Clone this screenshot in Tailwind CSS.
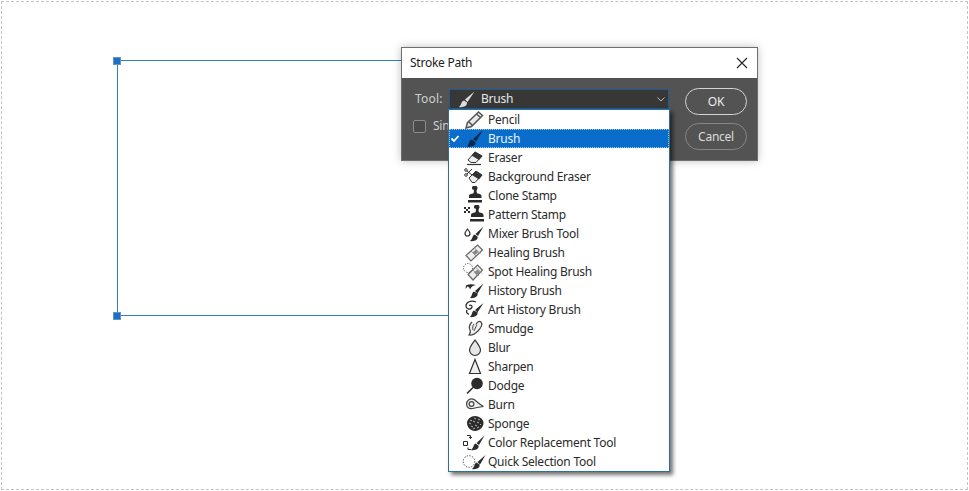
<!DOCTYPE html>
<html lang="en">
<head>
<meta charset="UTF-8">
<title>Stroke Path</title>
<script src="https://cdn.jsdelivr.net/npm/@tailwindcss/browser@4"></script>
</head>
<body class="bg-white">
<div class="relative w-[969px] h-[491px] overflow-hidden font-['Noto_Sans',sans-serif] text-[12px] tracking-[-0.25px]">
  <!-- canvas frame -->
  <div class="absolute left-[1px] top-[1px] w-[967px] h-[489px] border border-dashed border-[#c4c4c4]"></div>

  <!-- path -->
  <div class="absolute left-[117px] top-[60px] w-[400px] h-[256px] border border-[#3380b4]"></div>
  <div class="absolute left-[113px] top-[57px] w-[8px] h-[8px] bg-[#1c6fc6] border border-[#5f95c4]"></div>
  <div class="absolute left-[113px] top-[312px] w-[8px] h-[8px] bg-[#1c6fc6] border border-[#5f95c4]"></div>

  <!-- dialog -->
  <div class="absolute left-[401px] top-[47px] w-[357px] h-[114px] flex flex-col border border-[#6e6e6e] shadow-[0_0_8px_rgba(0,0,0,0.25)]">
    <div class="h-[30px] bg-white flex items-center justify-between pl-[8px] pr-[8px] text-[#222]">
      <span>Stroke Path</span>
      <svg width="12" height="12" viewBox="0 0 12 12" class="mr-[1px]"><path d="M1 1l10 10M11 1L1 11" stroke="#222" stroke-width="1.100" fill="none"/></svg>
    </div>
    <div class="flex-1 bg-[#535353] flex justify-between pl-[11px] pr-[10px] pt-[10px]">
      <div class="flex flex-col mt-[1px]">
        <div class="flex items-center h-[20px] pl-[2px] text-[#cfcfcf]">
          <span class="w-[34px] tracking-[0.2px]">Tool:</span>
          <div class="w-[220px] h-[20px] bg-[#373737] border border-[#1f5a92] flex items-center text-[#e6e6e6]">
            <svg width="24" height="19" viewBox="0 0 24 19" class="ml-[4px] shrink-0"><path d="M20.500 1.500l-9.500 8 2.500 2.500zM10 10.500c-3.500 1.500-2 4-5 6.500 4 .8 8.500-1 8-4.500z" fill="#dcdcdc"/></svg>
            <span class="ml-[3px] flex-1">Brush</span>
            <svg width="8" height="5" viewBox="0 0 8 5" class="mr-[3px]"><path d="M.5.500L4 4 7.500.500" stroke="#bbb" fill="none"/></svg>
          </div>
        </div>
        <div class="flex items-center mt-[8px] text-[#cfcfcf]">
          <span class="w-[13px] h-[13px] rounded-[2px] border border-[#8c8c8c] bg-[#4a4a4a]"></span>
          <span class="ml-[7px]">Sin</span>
        </div>
      </div>
      <div class="flex flex-col gap-[8px]">
        <button class="w-[62px] h-[27px] rounded-full border border-[#d4d4d4] text-[#ececec] text-center">OK</button>
        <button class="w-[62px] h-[27px] rounded-full border border-[#868686] text-[#dcdcdc] text-center">Cancel</button>
      </div>
    </div>
  </div>

  <!-- dropdown menu -->
  <div class="absolute left-[448px] top-[109px] w-[222px] h-[363px] bg-white border border-[#2d7096] shadow-[3px_3px_4px_rgba(0,0,0,0.55)] text-[#2b2b2b] flex flex-col">
    <div class="flex items-center h-[19px] shrink-0">
      <span class="w-[13px]"></span>
      <svg width="24" height="19" viewBox="0 0 24 19"><path d="M5.500 12.500L16.500 2l4 3.500L9.500 16.500l-5.500 1.500zM14.500 4l4 3.500M7 12l3 3" fill="#e8e8e8" stroke="#555" stroke-width="1.500"/></svg>
      <span class="ml-[2px]">Pencil</span>
    </div>
    <div class="flex items-center h-[19px] shrink-0 bg-[#0a6ccb] outline-1 outline-dotted -outline-offset-1 outline-[#9cc8ee] text-[#eaf5ff]">
      <svg width="13" height="19" viewBox="0 0 13 19"><path d="M2.500 9.500l2.500 2.500 4.500-5" stroke="#fff" stroke-width="1.800" fill="none"/></svg>
      <svg width="24" height="19" viewBox="0 0 24 19"><path d="M21 1l-10 9 3 2.500zM9.500 10.500c-3.500 1.500-1.500 4-4.500 7 4.500.8 9.500-1 8.500-4.500z" fill="#0d2a4a"/></svg>
      <span class="ml-[2px]">Brush</span>
    </div>
    <div class="flex items-center h-[19px] shrink-0">
      <span class="w-[13px]"></span>
      <svg width="24" height="19" viewBox="0 0 24 19"><path d="M6 12L13 4l7 4-6 6.500H9z" fill="#eee" stroke="#333"/><path d="M13 3.500l7.500 4.500-3.500 4-7.500-4.500z" fill="#333"/><path d="M5 16.500h14" stroke="#333" stroke-width="1.200"/></svg>
      <span class="ml-[2px]">Eraser</span>
    </div>
    <div class="flex items-center h-[19px] shrink-0">
      <span class="w-[13px]"></span>
      <svg width="24" height="19" viewBox="0 0 24 19"><path d="M7 11l7-7 6 4-7 7.500H10z" fill="#eee" stroke="#333"/><path d="M13.500 4l7 4-3.500 4.500-7-4.500z" fill="#333"/><circle cx="4" cy="3" r="1.300" fill="none" stroke="#333"/><circle cx="4" cy="8" r="1.300" fill="none" stroke="#333"/><path d="M5 4l5 4M5 7l5-5" stroke="#333"/></svg>
      <span class="ml-[2px]">Background Eraser</span>
    </div>
    <div class="flex items-center h-[19px] shrink-0">
      <span class="w-[13px]"></span>
      <svg width="24" height="19" viewBox="0 0 24 19"><path d="M10.500 3.500a2.700 2.700 0 1 1 4.500 0c-.8 1.500-.6 2.800.4 4 2 .3 4.100.6 4.100 2.500v2H7v-2c0-1.900 2.100-2.200 4.100-2.500 1-1.200 1.200-2.500.4-4zM6 14h14v2.500H6z" fill="#2b2b2b"/></svg>
      <span class="ml-[2px]">Clone Stamp</span>
    </div>
    <div class="flex items-center h-[19px] shrink-0">
      <span class="w-[13px]"></span>
      <svg width="24" height="19" viewBox="0 0 24 19"><path d="M12.500 3.500a2.700 2.700 0 1 1 4.500 0c-.8 1.500-.6 2.800.4 4 2 .3 4.100.6 4.100 2.500v2H9v-2c0-1.900 2.100-2.200 4.100-2.500 1-1.200 1.200-2.500.4-4zM8 14h14v2.500H8z" fill="#2b2b2b"/><path d="M2 2h2v2H2zM6 2h2v2H6zM4 4h2v2H4zM2 6h2v2H2zM6 6h2v2H6z" fill="#2b2b2b"/></svg>
      <span class="ml-[2px]">Pattern Stamp</span>
    </div>
    <div class="flex items-center h-[19px] shrink-0">
      <span class="w-[13px]"></span>
      <svg width="24" height="19" viewBox="0 0 24 19"><path d="M21.500 2.500l-8 7.500 2.500 2zM12.500 10.500c-2.500 1.500-1.500 4-4.500 6.500 4 .8 8.500-1 7.500-4.500z" fill="#2b2b2b"/><path d="M5.500 5c-2 2.500-2.500 3.500-2.500 4.500a2.500 2.500 0 0 0 5 0c0-1-.5-2-2.500-4.500z" fill="#fff" stroke="#2b2b2b" stroke-width="1.200"/></svg>
      <span class="ml-[2px]">Mixer Brush Tool</span>
    </div>
    <div class="flex items-center h-[19px] shrink-0">
      <span class="w-[13px]"></span>
      <svg width="24" height="19" viewBox="0 0 24 19"><path d="M4 12.500L15.500 2l5 5L9 18z" fill="#eee" stroke="#666" stroke-width="1.200"/><path d="M9 8l6 6M12.500 5l6 6" stroke="#999" fill="none"/><path d="M10.500 9.500l3.500-3 2.500 2.500-3.500 3z" fill="#888"/></svg>
      <span class="ml-[2px]">Healing Brush</span>
    </div>
    <div class="flex items-center h-[19px] shrink-0">
      <span class="w-[13px]"></span>
      <svg width="24" height="19" viewBox="0 0 24 19"><path d="M6 12.500L15.500 3l5 5L11 18z" fill="#eee" stroke="#666" stroke-width="1.200"/><path d="M11 8l6 6M14 5.500l6 6" stroke="#999" fill="none"/><path d="M12 10.500l3.500-3 2.500 2.500-3.500 3z" fill="#888"/><circle cx="6" cy="6" r="4.500" fill="none" stroke="#333" stroke-dasharray="1 1.500"/></svg>
      <span class="ml-[2px]">Spot Healing Brush</span>
    </div>
    <div class="flex items-center h-[19px] shrink-0">
      <span class="w-[13px]"></span>
      <svg width="24" height="19" viewBox="0 0 24 19"><path d="M21.500 2.500l-8.500 7.500 2.500 2.500zM12 10.500c-2.500 1.500-1.500 4-4 6.500 4 .8 8.500-1.500 7.500-4.500z" fill="#2b2b2b"/><path d="M4 4.500c3-1.500 6-1.500 10-.5-3 .5-4.500 1.500-6 4.500-.3-1.500-1-2.800-2.500-3L3.500 8z" fill="#2b2b2b"/></svg>
      <span class="ml-[2px]">History Brush</span>
    </div>
    <div class="flex items-center h-[19px] shrink-0">
      <span class="w-[13px]"></span>
      <svg width="24" height="19" viewBox="0 0 24 19"><path d="M21.500 3l-8.500 7 2.500 2.500zM12 10.500c-2.500 1.500-1.500 4-4 6.500 4 .8 8.500-1.500 7.500-4.500z" fill="#2b2b2b"/><path d="M14 2C9 0 4 2 4 6c0 3 4 4 5.500 2S9 4.500 7 5.500M5 10c-1 2 0 4 2 4" fill="none" stroke="#2b2b2b" stroke-width="1.300"/></svg>
      <span class="ml-[2px]">Art History Brush</span>
    </div>
    <div class="flex items-center h-[19px] shrink-0">
      <span class="w-[13px]"></span>
      <svg width="24" height="19" viewBox="0 0 24 19"><path d="M10 3c-3 3-3 6-2 8 .5 1 .5 3-1 5 3 .5 6-1 9-4 3-3 5-7 3-9-1.500-1.500-4 0-5 2.500" fill="#f0f0f0" stroke="#444" stroke-width="1.200"/><path d="M12 5c-1.500 2-1.500 4-1 6M15 6c-1.500 2-2 4-3 6" fill="none" stroke="#444"/></svg>
      <span class="ml-[2px]">Smudge</span>
    </div>
    <div class="flex items-center h-[19px] shrink-0">
      <span class="w-[13px]"></span>
      <svg width="24" height="19" viewBox="0 0 24 19"><path d="M13 2C10 6 7.500 9 7.500 12a5.500 5.500 0 0 0 11 0C18.500 9 16 6 13 2z" fill="#e6e6e6" stroke="#333" stroke-width="1.200"/></svg>
      <span class="ml-[2px]">Blur</span>
    </div>
    <div class="flex items-center h-[19px] shrink-0">
      <span class="w-[13px]"></span>
      <svg width="24" height="19" viewBox="0 0 24 19"><path d="M13 2.500L7.500 16.500h11z" fill="#f0f0f0" stroke="#333" stroke-width="1.200"/></svg>
      <span class="ml-[2px]">Sharpen</span>
    </div>
    <div class="flex items-center h-[19px] shrink-0">
      <span class="w-[13px]"></span>
      <svg width="24" height="19" viewBox="0 0 24 19"><circle cx="15" cy="7.500" r="5.800" fill="#2b2b2b"/><path d="M11 11.500L5 17.500" stroke="#2b2b2b" stroke-width="1.600"/></svg>
      <span class="ml-[2px]">Dodge</span>
    </div>
    <div class="flex items-center h-[19px] shrink-0">
      <span class="w-[13px]"></span>
      <svg width="24" height="19" viewBox="0 0 24 19"><path d="M21.500 11.500c-2 .2-4 .5-6.500 1-3 .6-6 2-8.500.5C4 11.500 4 7 6.500 5c2.500-1.500 5.500-1 7.500 1 1.500 1.500 4 3.500 7.500 5.500" fill="#f0f0f0" stroke="#444" stroke-width="1.200"/><circle cx="9.500" cy="9" r="2.400" fill="none" stroke="#444" stroke-width="1.200"/></svg>
      <span class="ml-[2px]">Burn</span>
    </div>
    <div class="flex items-center h-[19px] shrink-0">
      <span class="w-[13px]"></span>
      <svg width="24" height="19" viewBox="0 0 24 19"><path d="M5 9c0-4 4-7 8-7s8.500 3 8.500 7-4 8-8.500 8-8-4-8-8z" fill="#2b2b2b"/><path d="M8 6l2 1M12 4l2 1M16 5l2 1M7 9l2 1M11 7l2 1M15 8l2 1M18 10l1 1M9 12l2 1M13 11l2 1M11 15l2-1M15 14l2-1" stroke="#b5b5b5" stroke-width="1"/></svg>
      <span class="ml-[2px]">Sponge</span>
    </div>
    <div class="flex items-center h-[19px] shrink-0">
      <span class="w-[13px]"></span>
      <svg width="24" height="19" viewBox="0 0 24 19"><path d="M22.500 2.500l-8 7.500 2.500 2zM13.500 10.500c-2.500 1.500-1.500 4-4.500 6.500 4 .8 8.500-1 7.500-4.500z" fill="#2b2b2b"/><path d="M1.500 8.500h4v4h-4z" fill="#fff" stroke="#2b2b2b"/><path d="M5 2.500h3.500v3M10 4L8.500 5.500 7 4M6 14.500v2h3" fill="none" stroke="#2b2b2b"/></svg>
      <span class="ml-[2px]">Color Replacement Tool</span>
    </div>
    <div class="flex items-center h-[19px] shrink-0">
      <span class="w-[13px]"></span>
      <svg width="24" height="19" viewBox="0 0 24 19"><path d="M23.500 3l-8 7 2.500 2.500zM14.500 10.500c-2.500 1.500-1.500 4-4.500 6.500 4 .8 8.500-1 7.500-4.500z" fill="#2b2b2b"/><circle cx="7" cy="9.500" r="5.800" fill="none" stroke="#333" stroke-dasharray="1.200 1.500"/></svg>
      <span class="ml-[2px]">Quick Selection Tool</span>
    </div>
  </div>
</div>
</body>
</html>
